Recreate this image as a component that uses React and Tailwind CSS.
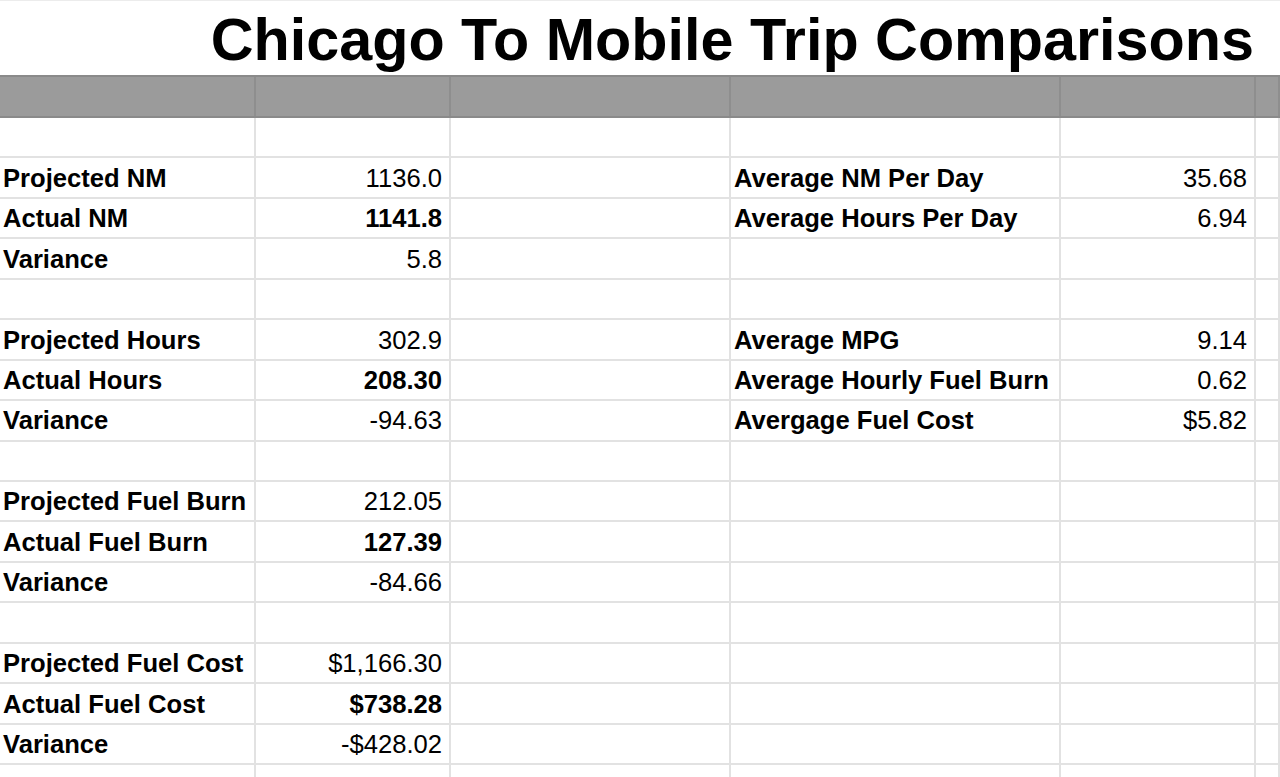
import React from "react";

const cols = ["w-[256px]", "w-[195px]", "w-[280px]", "w-[330px]", "w-[195px]", "flex-1"];

const rows = [
  ["", "", "", ""],
  ["Projected NM", "1136.0", "Average NM Per Day", "35.68"],
  ["Actual NM", "1141.8", "Average Hours Per Day", "6.94", true],
  ["Variance", "5.8", "", ""],
  ["", "", "", ""],
  ["Projected Hours", "302.9", "Average MPG", "9.14"],
  ["Actual Hours", "208.30", "Average Hourly Fuel Burn", "0.62", true],
  ["Variance", "-94.63", "Avergage Fuel Cost", "$5.82"],
  ["", "", "", ""],
  ["Projected Fuel Burn", "212.05", "", ""],
  ["Actual Fuel Burn", "127.39", "", "", true],
  ["Variance", "-84.66", "", ""],
  ["", "", "", ""],
  ["Projected Fuel Cost", "$1,166.30", "", ""],
  ["Actual Fuel Cost", "$738.28", "", "", true],
  ["Variance", "-$428.02", "", ""],
  ["", "", "", ""],
];

function Cell({ w, children, right, bold }) {
  return (
    <div
      className={`${w} shrink-0 h-full border-r-2 border-[#e2e2e2] flex items-center pt-[2px] ${
        right ? "justify-end pr-[7px]" : "pl-[3px]"
      } ${bold ? "font-bold" : "font-normal"} whitespace-nowrap overflow-hidden`}
    >
      {children}
    </div>
  );
}

export default function App() {
  return (
    <div
      className="w-[1280px] h-[777px] overflow-hidden bg-white text-black text-[25.6px] leading-none"
      style={{ fontFamily: '"Liberation Sans", Arial, sans-serif' }}
    >
      <div className="h-[75px] flex items-start border-t border-[#ececec]">
        <div className="w-[1256px] flex justify-end pr-[2px] pt-[8.5px]">
          <span className="font-bold text-[59.3px] leading-none">Chicago To Mobile Trip Comparisons</span>
        </div>
      </div>
      <div className="h-[43px] flex bg-[#9b9b9b] border-t-2 border-b-2 border-[#8a8a8a]">
        {cols.map((c, i) => (
          <div key={i} className={`${c} shrink-0 h-full border-r-2 border-[#8e8e8e]`} />
        ))}
      </div>
      {rows.map((r, i) => (
        <div key={i} className="h-[40.44px] flex border-b-2 border-[#e2e2e2]">
          <Cell w={cols[0]} bold>{r[0]}</Cell>
          <Cell w={cols[1]} right bold={r[4]}>{r[1]}</Cell>
          <Cell w={cols[2]} />
          <Cell w={cols[3]} bold>{r[2]}</Cell>
          <Cell w={cols[4]} right>{r[3]}</Cell>
          <Cell w={cols[5]} />
        </div>
      ))}
    </div>
  );
}
